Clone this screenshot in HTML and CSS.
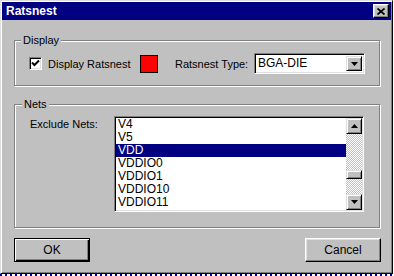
FILE: index.html
```html
<!DOCTYPE html>
<html lang="en">
<head>
  <meta charset="UTF-8">
  <title>Ratsnest</title>
  <link rel="stylesheet" href="styles.css">
</head>
<body>
  <div class="window">
    <div class="titlebar">
      <span class="title">Ratsnest</span>
      <button class="close-btn">
        <svg width="8" height="7" viewBox="0 0 8 7"><path d="M0.5 0.5 L7.5 6.5 M7.5 0.5 L0.5 6.5" stroke="#000" stroke-width="1.7" fill="none"/></svg>
      </button>
    </div>

    <div class="content">
      <fieldset class="group display">
        <legend>Display</legend>
        <div class="row">
          <label class="check">
            <span class="checkbox">
              <svg width="9" height="9" viewBox="0 0 9 9"><path d="M1 3.5 L3.5 6 L8 1.5" stroke="#000" stroke-width="2" fill="none"/></svg>
            </span>
            Display Ratsnest
          </label>
          <span class="swatch"></span>
          <span class="type-label">Ratsnest Type:</span>
          <div class="combo">
            <span class="combo-value">BGA-DIE</span>
            <span class="arrow-btn">
              <svg width="7" height="4" viewBox="0 0 7 4"><path d="M0 0 H7 L3.5 4 Z" fill="#000"/></svg>
            </span>
          </div>
        </div>
      </fieldset>

      <fieldset class="group nets">
        <legend>Nets</legend>
        <div class="row top">
          <span class="nets-label">Exclude Nets:</span>
          <div class="listbox">
            <ul class="items">
              <li>V4</li>
              <li>V5</li>
              <li class="selected">VDD</li>
              <li>VDDIO0</li>
              <li>VDDIO1</li>
              <li>VDDIO10</li>
              <li>VDDIO11</li>
            </ul>
            <div class="scrollbar">
              <span class="arrow-btn">
                <svg width="7" height="4" viewBox="0 0 7 4"><path d="M0 4 H7 L3.5 0 Z" fill="#000"/></svg>
              </span>
              <div class="track"><span class="thumb"></span></div>
              <span class="arrow-btn">
                <svg width="7" height="4" viewBox="0 0 7 4"><path d="M0 0 H7 L3.5 4 Z" fill="#000"/></svg>
              </span>
            </div>
          </div>
        </div>
      </fieldset>

      <div class="buttons">
        <button class="btn default">OK</button>
        <button class="btn">Cancel</button>
      </div>
    </div>
  </div>
</body>
</html>
```

FILE: styles.css
```css
* {
  box-sizing: border-box;
}
html {
  background: #fff repeating-linear-gradient(90deg, #0000a8 0 2px, #fff 2px 5px);
}
body {
  margin: 0;
  font-family: "Liberation Sans", Arial, sans-serif;
  font-size: 11px;
  color: #000;
}

.window {
  width: 393px;
  height: 274px;
  padding: 1px;
  background: #c0c0c0;
  border: 1px solid;
  border-color: #dfdfdf #000 #000 #dfdfdf;
  box-shadow: inset 1px 1px #fff, inset -1px -1px #808080;
}
.titlebar {
  height: 18px;
  display: flex;
  align-items: center;
  justify-content: space-between;
  padding: 0 2px 0 4px;
  background: #000080;
  color: #fff;
  font-weight: bold;
  font-size: 12px;
}
.close-btn {
  width: 16px;
  height: 14px;
  padding: 0;
  display: flex;
  align-items: center;
  justify-content: center;
  background: #c0c0c0;
  border: 1px solid;
  border-color: #fff #000 #000 #fff;
  box-shadow: inset -1px -1px #808080, inset 1px 1px #dfdfdf;
}

.content {
  padding: 14px 11px 0 12px;
}
.group {
  margin: 0;
  min-width: 0;
  border: 1px solid #808080;
  box-shadow: inset 1px 1px #fff, 1px 1px #fff;
}
.group legend {
  margin-left: -8px;
  padding: 0 2px;
  line-height: 13px;
  background: #c0c0c0;
}
.row {
  display: flex;
  align-items: center;
}
.row.top {
  align-items: flex-start;
}

.display {
  height: 52px;
  padding: 6px 14px 0;
}
.check {
  width: 111px;
  display: flex;
  align-items: center;
  gap: 6px;
}
.checkbox {
  width: 13px;
  height: 13px;
  display: flex;
  align-items: center;
  justify-content: center;
  background: #fff;
  border: 1px solid;
  border-color: #808080 #fff #fff #808080;
  box-shadow: inset 1px 1px #000, inset -1px -1px #dfdfdf;
}
.swatch {
  width: 18px;
  height: 18px;
  margin-right: 17px;
  background: #f00;
  border: 1px solid #000;
}
.type-label {
  width: 79px;
}
.combo {
  width: 111px;
  height: 21px;
  display: flex;
  padding: 2px;
  background: #fff;
  border: 1px solid;
  border-color: #808080 #fff #fff #808080;
  box-shadow: inset 1px 1px #000, inset -1px -1px #dfdfdf;
}
.combo-value {
  flex: 1;
  padding-left: 1px;
  font-size: 12px;
  line-height: 15px;
}
.arrow-btn {
  width: 16px;
  height: 16px;
  flex: none;
  display: flex;
  align-items: center;
  justify-content: center;
  background: #c0c0c0;
  border: 1px solid;
  border-color: #dfdfdf #000 #000 #dfdfdf;
  box-shadow: inset 1px 1px #fff, inset -1px -1px #808080;
}
.combo .arrow-btn {
  height: 15px;
}

.nets {
  margin-top: 12px;
  padding: 5px 15px 15px;
}
.nets-label {
  width: 84px;
  margin-top: 2px;
}
.listbox {
  width: 250px;
  height: 96px;
  display: flex;
  padding: 1px;
  background: #fff;
  border: 1px solid;
  border-color: #808080 #fff #fff #808080;
  box-shadow: inset 1px 1px #000, inset -1px -1px #dfdfdf;
}
.items {
  flex: 1;
  margin: 0;
  padding: 0;
  list-style: none;
  font-size: 12px;
}
.items li {
  height: 13px;
  padding-left: 2px;
  line-height: 13px;
}
.items li.selected {
  background: #000080;
  color: #fff;
}
.scrollbar {
  width: 16px;
  display: flex;
  flex-direction: column;
}
.track {
  flex: 1;
  padding-top: 36px;
  background: repeating-conic-gradient(#c0c0c0 0 25%, #fff 0 50%) 0 0 / 2px 2px;
}
.thumb {
  display: block;
  height: 9px;
  background: #c0c0c0;
  border: 1px solid;
  border-color: #dfdfdf #000 #000 #dfdfdf;
  box-shadow: inset 1px 1px #fff, inset -1px -1px #808080;
}

.buttons {
  display: flex;
  justify-content: space-between;
  margin: 10px -1px 0 0;
}
.btn {
  width: 76px;
  height: 24px;
  padding: 0;
  font-family: inherit;
  font-size: 12px;
  background: #c0c0c0;
  border: 1px solid;
  border-color: #fff #000 #000 #fff;
  box-shadow: inset -1px -1px #808080, inset 1px 1px #dfdfdf;
}
.btn.default {
  border: 1px solid #000;
  box-shadow: inset 1px 1px #fff, inset -1px -1px #000, inset -2px -2px #808080;
}
```
